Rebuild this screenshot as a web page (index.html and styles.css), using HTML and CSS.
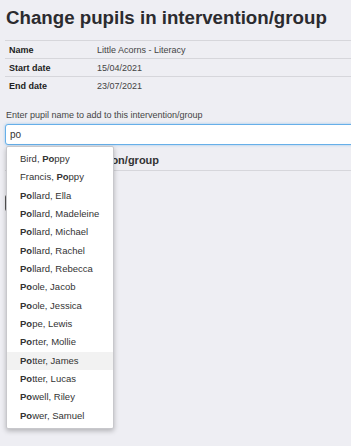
FILE: index.html
```html
<!DOCTYPE html>
<html lang="en">
<head>
    <meta charset="UTF-8">
    <title>Change pupils in intervention/group</title>
    <link rel="stylesheet" href="styles.css">
</head>
<body>
    <h1 class="title">Change pupils in intervention/group</h1>
    <table class="details">
        <tr><th>Name</th><td>Little Acorns - Literacy</td></tr>
        <tr><th>Start date</th><td>15/04/2021</td></tr>
        <tr><th>End date</th><td>23/07/2021</td></tr>
    </table>

    <div class="search">
        <label class="search-label" for="pupil">Enter pupil name to add to this intervention/group</label>
        <div class="search-wrap">
            <input class="search-input" id="pupil" type="text" value="po">
            <ul class="menu">
                <li><span>Bird, <b>Po</b>ppy</span></li>
                <li><span>Francis, <b>Po</b>ppy</span></li>
                <li><span><b>Po</b>llard, Ella</span></li>
                <li><span><b>Po</b>llard, Madeleine</span></li>
                <li><span><b>Po</b>llard, Michael</span></li>
                <li><span><b>Po</b>llard, Rachel</span></li>
                <li><span><b>Po</b>llard, Rebecca</span></li>
                <li><span><b>Po</b>ole, Jacob</span></li>
                <li><span><b>Po</b>ole, Jessica</span></li>
                <li><span><b>Po</b>pe, Lewis</span></li>
                <li><span><b>Po</b>rter, Mollie</span></li>
                <li class="active"><span><b>Po</b>tter, James</span></li>
                <li><span><b>Po</b>tter, Lucas</span></li>
                <li><span><b>Po</b>well, Riley</span></li>
                <li><span><b>Po</b>wer, Samuel</span></li>
            </ul>
        </div>
    </div>

    <h3 class="section">Pupils in intervention/group</h3>
    <div class="buttons">
        <span class="btn"></span>
    </div>
</body>
</html>
```

FILE: styles.css
```css
html {
    overflow: hidden;
}

body {
    margin: 0;
    padding: 0 0 0 5px;
    min-height: 446px;
    background-color: #eeeef3;
    color: #333;
    font-family: 'Liberation Sans', Arial, sans-serif;
}

.title {
    margin: 0;
    padding: 5px 0 0 1px;
    font-size: 18.7px;
    line-height: 26px;
    font-weight: bold;
    color: #2b2b2f;
    white-space: nowrap;
}

.details {
    margin-top: 9px;
    width: 360px;
    border-collapse: collapse;
    font-size: 9px;
}

.details th,
.details td {
    height: 17px;
    padding: 0 4px;
    border-top: 1px solid #d6d6db;
    text-align: left;
    vertical-align: middle;
}

.details th {
    width: 80px;
    font-weight: bold;
    color: #222;
}

.details td {
    color: #444;
}

.search {
    margin-top: 15px;
}

.search-label {
    display: block;
    padding-left: 1px;
    font-size: 9px;
    line-height: 12px;
    color: #444;
}

.search-wrap {
    position: relative;
    margin-top: 3px;
}

.search-input {
    display: block;
    box-sizing: border-box;
    width: 360px;
    height: 21px;
    margin: 0;
    padding: 0 4px;
    border: 1px solid #66afe9;
    border-radius: 3px;
    box-shadow: 0 0 3px rgba(102, 175, 233, 0.6);
    font-family: inherit;
    font-size: 10px;
    color: #333;
    outline: none;
    background: #fff;
}

.menu {
    position: absolute;
    top: 22px;
    left: 1px;
    z-index: 2;
    width: 108px;
    box-sizing: border-box;
    margin: 0;
    padding: 3px 0 3px;
    list-style: none;
    background: #fff;
    border: 1px solid #c8c8cc;
    border-radius: 2px;
    box-shadow: 0 2px 5px rgba(0, 0, 0, 0.25);
    font-size: 9.5px;
}

.menu li {
    height: 18.35px;
    line-height: 18.35px;
    padding-left: 13px;
    color: #333;
    white-space: nowrap;
}

.menu li.active {
    background: #f2f2f2;
}

.menu b {
    font-weight: bold;
}

.section {
    margin: 7px 0 0;
    padding: 0 0 2px 8px;
    width: 360px;
    border-bottom: 1px solid #d6d6db;
    font-size: 11px;
    line-height: 16px;
    color: #333;
}

.buttons {
    margin-top: 24px;
}

.btn {
    display: block;
    width: 30px;
    height: 16px;
    background: #555;
    border-radius: 2px;
}
```
